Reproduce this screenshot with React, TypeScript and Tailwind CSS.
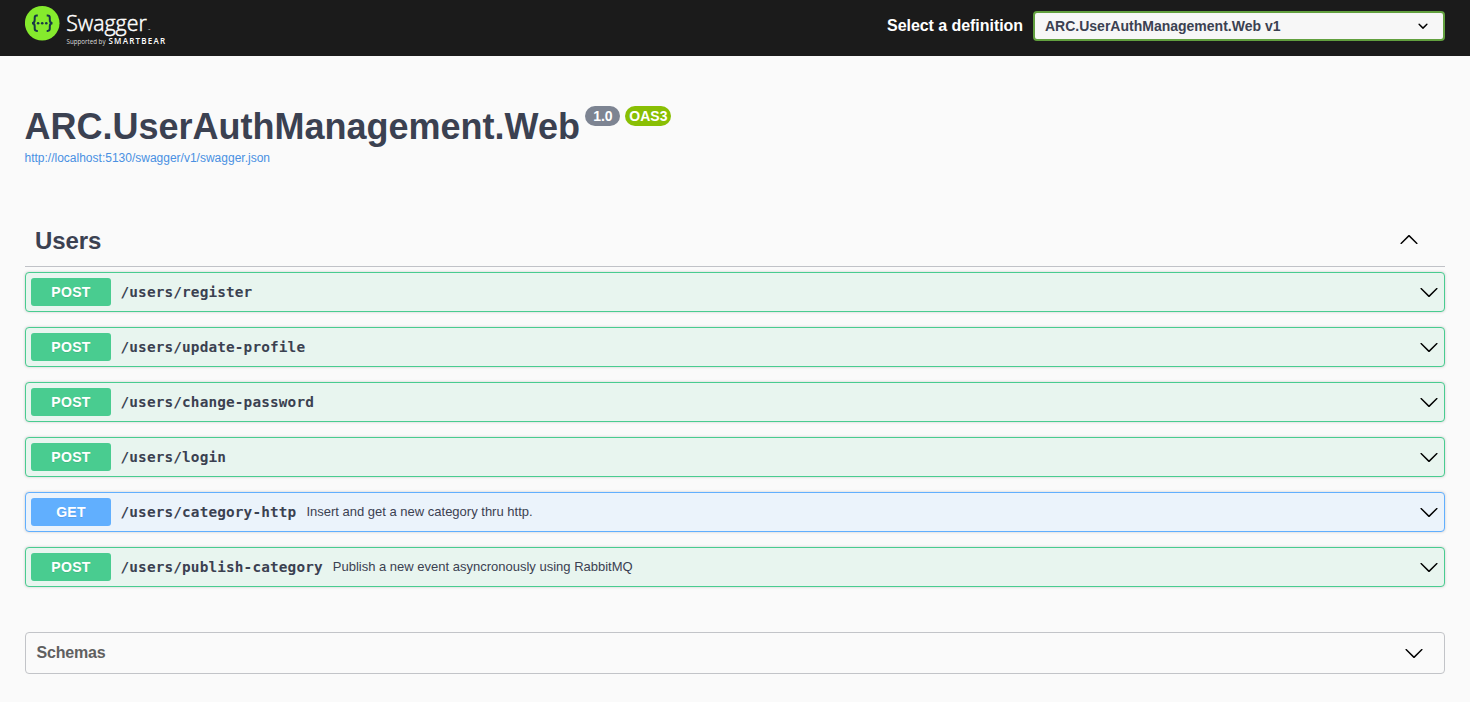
import React from "react";

type Operation = { method: "POST" | "GET"; path: string; summary?: string };

const operations: Operation[] = [
  { method: "POST", path: "/users/register" },
  { method: "POST", path: "/users/update-profile" },
  { method: "POST", path: "/users/change-password" },
  { method: "POST", path: "/users/login" },
  { method: "GET", path: "/users/category-http", summary: "Insert and get a new category thru http." },
  { method: "POST", path: "/users/publish-category", summary: "Publish a new event asyncronously using RabbitMQ" },
];

const rowStyles = {
  POST: "border-[#49cc90] bg-[#e8f5ef]",
  GET: "border-[#61affe] bg-[#ebf3fb]",
};

const methodStyles = {
  POST: "bg-[#49cc90]",
  GET: "bg-[#61affe]",
};

function Arrow({ className = "" }: { className?: string }) {
  return (
    <svg viewBox="0 0 20 20" className={`size-5 shrink-0 fill-black ${className}`}>
      <path d="M17.418 6.109c.272-.268.709-.268.979 0s.271.701 0 .969l-7.908 7.83c-.27.268-.707.268-.979 0l-7.908-7.83c-.27-.268-.27-.701 0-.969.271-.268.709-.268.979 0L10 13.25l7.418-7.141z" />
    </svg>
  );
}

function Logo() {
  return (
    <svg width="150" height="48" viewBox="0 0 150 48" className="block">
      <circle cx="17.2" cy="23.2" r="17.3" fill="#85ea2d" />
      <g fill="none" stroke="#173647" strokeWidth="2">
        <path d="M12.8 15.5h-.9q-2.2 0-2.2 2.3v2.3q0 3.1-2.7 3.1q2.7 0 2.7 3.1v2.3q0 2.3 2.2 2.3h.9" />
        <path d="M21.7 15.5h.9q2.2 0 2.2 2.3v2.3q0 3.1 2.7 3.1q-2.7 0-2.7 3.1v2.3q0 2.3-2.2 2.3h-.9" />
      </g>
      <g fill="#173647">
        <circle cx="13.1" cy="23.2" r="1.3" />
        <circle cx="17.2" cy="23.2" r="1.3" />
        <circle cx="21.3" cy="23.2" r="1.3" />
      </g>
      <g fill="#fff" fontFamily="'Open Sans', sans-serif">
        <text x="41.2" y="30.8" fontSize="22.6" fontWeight="300" stroke="#fff" strokeWidth="0.5" textLength="80.5" lengthAdjust="spacingAndGlyphs">Swagger</text>
        <text x="123" y="30.5" fontSize="3">™</text>
        <text x="41.5" y="44.3" fontSize="6.4" fillOpacity="0.85" textLength="39" lengthAdjust="spacingAndGlyphs">Supported by</text>
        <text x="83.5" y="44.2" fontSize="8" fontWeight="600" textLength="56.5" lengthAdjust="spacing">SMARTBEAR</text>
      </g>
    </svg>
  );
}

export default function App() {
  return (
    <div className="min-h-[702px] bg-[#fafafa] font-['Liberation_Sans',Arial,sans-serif] text-[#3b4151]">
      <header className="flex h-14 items-start justify-between bg-[#1b1b1b] pr-[25px] pl-[25px]">
        <Logo />
        <div className="flex items-center pt-[11px]">
          <span className="mr-[10px] text-base leading-[30px] font-bold tracking-[-0.05px] text-white">Select a definition</span>
          <button className="flex h-[30px] w-[412px] items-center justify-between rounded border-2 border-[#62a03f] bg-[#f7f7f7] pr-[10px] pl-[10px] text-sm font-bold">
            <span>ARC.UserAuthManagement.Web v1</span>
            <svg viewBox="0 0 20 20" className="size-5 fill-black">
              <path d="M13.418 7.859a.695.695 0 01.978 0 .68.68 0 010 .969l-3.908 3.83a.697.697 0 01-.979 0l-3.908-3.83a.68.68 0 010-.969.695.695 0 01.978 0L10 11l3.418-3.141z" />
            </svg>
          </button>
        </div>
      </header>

      <main className="px-[25px]">
        <section className="h-[160px] pt-[50px]">
          <div className="-ml-[0.5px] flex items-start">
            <h1 className="text-4xl leading-[41px] font-bold">ARC.UserAuthManagement.Web</h1>
            <span className="ml-[5.5px] h-5 w-[35px] rounded-[10px] bg-[#7d8492] text-center text-sm leading-5 font-bold text-white">1.0</span>
            <span className="ml-[5px] h-5 w-[46px] rounded-[10px] bg-[#89bf04] text-center text-sm leading-5 font-bold text-white">OAS3</span>
          </div>
          <a href="#" className="mt-[3px] -ml-[0.5px] block w-fit text-xs leading-4 text-[#4990e2]">http://localhost:5130/swagger/v1/swagger.json</a>
        </section>

        <section>
          <div className="flex h-[51px] items-center justify-between border-b border-[#c0c2c7] pr-[26px] pl-[10px]">
            <h2 className="text-2xl leading-7 font-bold tracking-[-0.1px]">Users</h2>
            <Arrow className="-mt-[2px] rotate-180" />
          </div>
          <div className="flex flex-col gap-[15px] pt-[5px]">
            {operations.map((op) => (
              <div
                key={op.path}
                className={`flex h-10 items-center rounded border pr-[5px] pl-[5px] shadow-[0_0_3px_rgba(0,0,0,0.19)] ${rowStyles[op.method]}`}
              >
                <span
                  className={`h-7 w-20 rounded-[3px] text-center text-sm leading-7 font-bold tracking-[0.3px] text-white [text-shadow:0_1px_0_rgba(0,0,0,0.1)] ${methodStyles[op.method]}`}
                >
                  {op.method}
                </span>
                <span className="ml-[9.5px] font-['DejaVu_Sans_Mono',monospace] text-[14.4px] leading-5 font-bold tracking-[0.13px]">{op.path}</span>
                {op.summary && <span className="ml-[10px] text-[13px] leading-4">{op.summary}</span>}
                <Arrow className="ml-auto" />
              </div>
            ))}
          </div>
        </section>

        <section className="mt-[45px] flex h-[42px] items-center justify-between rounded border border-[#c2c4c8] pr-5 pl-[10.5px]">
          <h3 className="text-base leading-5 font-bold tracking-[-0.2px] text-[#606060]">Schemas</h3>
          <Arrow />
        </section>
      </main>
    </div>
  );
}
